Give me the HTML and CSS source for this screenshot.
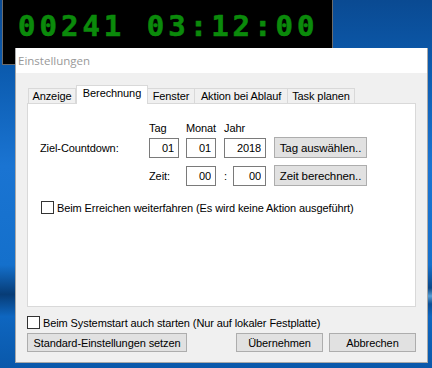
FILE: index.html
```html
<!DOCTYPE html>
<html lang="de">
<head>
    <meta charset="UTF-8">
    <meta name="viewport" content="width=device-width, initial-scale=1.0">
    <title>Einstellungen</title>
    <link rel="stylesheet" href="styles.css">
</head>
<body>
    <div class="timer-window">
        <span class="timer">00241 03:12:00</span>
    </div>

    <div class="dialog">
        <div class="titlebar">Einstellungen</div>

        <div class="dialog-body">
            <div class="tabs">
                <div class="tab tab-anzeige">Anzeige</div>
                <div class="tab tab-berechnung active">Berechnung</div>
                <div class="tab tab-fenster">Fenster</div>
                <div class="tab tab-aktion">Aktion bei Ablauf</div>
                <div class="tab tab-task">Task planen</div>
            </div>

            <div class="panel">
                <div class="target-grid">
                    <span></span>
                    <span class="col-label">Tag</span>
                    <span class="col-label">Monat</span>
                    <span class="col-label">Jahr</span>
                    <span></span>

                    <span class="row-label">Ziel-Countdown:</span>
                    <input class="field" type="text" value="01">
                    <input class="field" type="text" value="01">
                    <input class="field field-year" type="text" value="2018">
                    <button class="btn">Tag auswählen..</button>

                    <span></span>
                    <span class="row-label">Zeit:</span>
                    <input class="field" type="text" value="00">
                    <div class="minutes">
                        <span class="colon">:</span>
                        <input class="field field-min" type="text" value="00">
                    </div>
                    <button class="btn">Zeit berechnen..</button>
                </div>

                <label class="check check-continue">
                    <input type="checkbox">
                    Beim Erreichen weiterfahren (Es wird keine Aktion ausgeführt)
                </label>
            </div>

            <label class="check check-startup">
                <input type="checkbox">
                Beim Systemstart auch starten (Nur auf lokaler Festplatte)
            </label>

            <div class="actions">
                <button class="btn btn-defaults">Standard-Einstellungen setzen</button>
                <span class="spacer"></span>
                <button class="btn btn-action">Übernehmen</button>
                <button class="btn btn-action">Abbrechen</button>
            </div>
        </div>
    </div>
</body>
</html>
```

FILE: styles.css
```css
html, body { margin: 0; height: 100%; }
body {
    width: 432px; height: 368px; overflow: hidden; position: relative;
    font-family: "Liberation Sans", Arial, sans-serif; font-size: 11px; letter-spacing: -0.1px; color: #000;
    background:
        radial-gradient(ellipse 60px 8px at 432px 296px, rgba(120, 200, 255, 0.7), transparent),
        linear-gradient(180deg, #0a4a92 0%, #0c5cb0 20%, #1a74d2 45%, #1470cc 72%, #073c76 80%, #0e66c0 86%, #0a58aa 100%);
}

/* countdown window */
.timer-window {
    position: absolute; left: 2px; top: -1px; width: 329px; height: 64px;
    background: #000; border: 1px solid #6b6b6b;
}
.timer {
    display: block; margin: 9px 0 0 15px;
    font-family: "DejaVu Sans Mono", monospace; font-weight: bold; font-size: 29px;
    letter-spacing: 4px; color: #0b8a0b; line-height: 34px;
    -webkit-text-stroke: 0.6px #0b8a0b;
}

/* settings dialog */
.dialog {
    position: absolute; left: 15px; top: 48px; width: 413px; height: 315px; box-sizing: border-box;
    background: #f0f0f0; border: 1px solid #a9a9a9; border-top: none;
}
.titlebar {
    height: 25px; background: #fff; padding-left: 2px;
    font-family: "Open Sans", sans-serif; font-size: 11.5px; letter-spacing: 0; line-height: 26px; color: #999;
}
.dialog-body { padding: 12px 11px 0 11px; }

.tabs { display: flex; align-items: flex-end; margin-left: 1px; height: 18px; position: relative; z-index: 1; }
.tab {
    height: 15px; box-sizing: border-box; text-align: center; line-height: 15px; white-space: nowrap;
    border: 1px solid #d9d9d9; border-bottom: none; border-left: none; background: #f0f0f0;
}
.tab-anzeige { width: 48px; border-left: 1px solid #d9d9d9; }
.tab-berechnung { width: 72px; }
.tab-fenster { width: 47px; }
.tab-aktion { width: 93px; }
.tab-task { width: 67px; }
.tab.active {
    height: 19px; margin-bottom: -1px; background: #fff; line-height: 14px;
    border-left: 1px solid #d9d9d9;
}

.panel {
    height: 204px; box-sizing: border-box; background: #fff;
    border: 1px solid #d9d9d9; padding: 18px 0 0 12px;
}

.target-grid {
    display: grid;
    grid-template-columns: 102px 30px 31px 43px 93px;
    grid-template-rows: 8px 21px 21px;
    column-gap: 7px; row-gap: 7px; align-items: center;
}
.col-label { align-self: start; line-height: 13px; white-space: nowrap; }
.row-label { white-space: nowrap; }
.field {
    width: 30px; height: 20px; box-sizing: border-box; margin: 0;
    border: 1px solid #7a7a7a; background: #fff; padding: 0 4px 0 0;
    font: inherit; letter-spacing: inherit; text-align: right;
}
.field-year { width: 42px; }
.minutes { display: flex; align-items: center; justify-content: space-between; }
.field-min { width: 33px; margin-right: 1px; }

.btn {
    height: 21px; box-sizing: border-box; margin: 0; padding: 0;
    background: #e1e1e1; border: 1px solid #adadad; white-space: nowrap;
    font: inherit; font-size: 11.5px; letter-spacing: inherit; color: #000;
}

.check { display: flex; align-items: center; gap: 3px; white-space: nowrap; }
.check input {
    appearance: none; -webkit-appearance: none; margin: 0;
    width: 13px; height: 13px; border: 1px solid #333; background: #fff;
}
.check-continue { margin: 15px 0 0 1px; }
.check-startup { margin: 9px 0 0 0; }

.actions { display: flex; gap: 6px; margin-top: 4px; }
.actions .btn { height: 19px; font-size: 11px; }
.btn-defaults { width: 160px; }
.spacer { flex: 1; }
.btn-action { width: 87px; }
```
